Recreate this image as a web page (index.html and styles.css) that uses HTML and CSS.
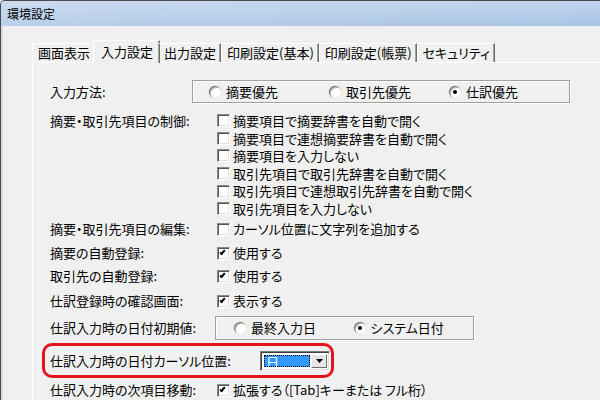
FILE: index.html
```html
<!DOCTYPE html>
<html lang="ja">

<head>
  <meta charset="utf-8">
  <title>環境設定</title>
  <link rel="stylesheet" href="styles.css">
</head>

<body>
  <div class="window">
    <div class="titlebar">環境設定</div>
    <div class="client">
      <div class="tabs">
        <div class="tab">画面表示</div>
        <div class="tab active">入力設定</div>
        <div class="tab">出力設定</div>
        <div class="tab">印刷設定(基本)</div>
        <div class="tab">印刷設定(帳票)</div>
        <div class="tab">セキュリティ</div>
      </div>
      <div class="pane">
        <div class="row r-method">
          <div class="label">入力方法:</div>
          <div class="group g-method">
            <span class="opt"><span class="radio"></span>摘要優先</span>
            <span class="opt"><span class="radio"></span>取引先優先</span>
            <span class="opt"><span class="radio on"></span>仕訳優先</span>
          </div>
        </div>

        <div class="row r-control">
          <div class="label">摘要・取引先項目の制御:</div>
          <div class="checks">
            <span class="opt"><span class="check"></span>摘要項目で摘要辞書を自動で開く</span>
            <span class="opt"><span class="check"></span>摘要項目で連想摘要辞書を自動で開く</span>
            <span class="opt"><span class="check"></span>摘要項目を入力しない</span>
            <span class="opt"><span class="check"></span>取引先項目で取引先辞書を自動で開く</span>
            <span class="opt"><span class="check"></span>取引先項目で連想取引先辞書を自動で開く</span>
            <span class="opt"><span class="check"></span>取引先項目を入力しない</span>
          </div>
        </div>

        <div class="row r-edit">
          <div class="label">摘要・取引先項目の編集:</div>
          <span class="opt"><span class="check"></span>カーソル位置に文字列を追加する</span>
        </div>

        <div class="row r-auto1">
          <div class="label">摘要の自動登録:</div>
          <span class="opt"><span class="check on"></span>使用する</span>
        </div>

        <div class="row r-auto2">
          <div class="label">取引先の自動登録:</div>
          <span class="opt"><span class="check on"></span>使用する</span>
        </div>

        <div class="row r-confirm">
          <div class="label">仕訳登録時の確認画面:</div>
          <span class="opt"><span class="check on"></span>表示する</span>
        </div>

        <div class="row r-date">
          <div class="label">仕訳入力時の日付初期値:</div>
          <div class="group g-date">
            <span class="opt"><span class="radio"></span>最終入力日</span>
            <span class="opt"><span class="radio on"></span>システム日付</span>
          </div>
        </div>

        <div class="row r-cursor">
          <div class="label">仕訳入力時の日付カーソル位置:</div>
          <div class="combo">
            <span class="combo-value"><span class="combo-text">日</span></span>
            <span class="combo-button">
              <svg width="7" height="4" viewBox="0 0 7 4"><path d="M0 0H7L3.5 4Z" fill="#000"/></svg>
            </span>
          </div>
        </div>

        <div class="row r-next">
          <div class="label">仕訳入力時の次項目移動:</div>
          <span class="opt"><span class="check on"></span>拡張する（[Tab]キーまたは フル桁）</span>
        </div>
      </div>
    </div>
  </div>
</body>

</html>
```

FILE: styles.css
```css
*,
*::before,
*::after {
  box-sizing: border-box;
}

body {
  margin: 0;
  width: 600px;
  height: 400px;
  overflow: hidden;
  font-family: "Noto Sans CJK JP", "Noto Sans", sans-serif;
  font-size: 13px;
  font-feature-settings: "palt";
  color: #000;
  background: #f0f0f0;
}

.window {
  height: 400px;
  border-top: 1px solid #4a4a4a;
  border-left: 1px solid #4a4a4a;
  border-top-left-radius: 5px;
  overflow: hidden;
}

.titlebar {
  height: 25px;
  line-height: 25px;
  padding-left: 6px;
  font-size: 12px;
  background:
    linear-gradient(to right, rgba(255, 255, 255, 0.18), rgba(255, 255, 255, 0)),
    linear-gradient(#c0d4ec, #a9c4e6);
}

.client {
  height: 374px;
  padding: 14px 0 0 29px;
  border-left: 2px solid #dcdcdc;
  background: #f0f0f0;
}

/* tabs */
.tabs {
  display: flex;
  align-items: flex-end;
  height: 22px;
  position: relative;
  z-index: 1;
}

.tab {
  height: 19px;
  line-height: 18px;
  padding: 0 4px 0 5px;
  border-top: 1px solid #fff;
  border-left: 1px solid #fff;
  border-right: 1px solid #6e6e6e;
  box-shadow: inset -1px 0 0 #a0a0a0;
  white-space: nowrap;
}

.tab.active {
  height: 23px;
  line-height: 21px;
  margin: 0 -1px -1px -2px;
  padding: 0 6px 0 7px;
  background: #f0f0f0;
}

.tab.active + .tab {
  border-left: none;
  padding-left: 5px;
}

/* tab page */
.pane {
  display: flex;
  flex-direction: column;
  height: 340px;
  padding: 17px 0 0 17px;
  border-top: 1px solid #fff;
  border-left: 1px solid #fff;
}

.row {
  display: grid;
  grid-template-columns: 166px auto;
  align-items: center;
  height: 18px;
  line-height: 18px;
  white-space: nowrap;
}

.r-method { height: 23px; }
.r-control { height: 106px; margin-top: 9px; align-items: start; }
.r-control .label { line-height: 17.6px; }
.r-edit { margin-top: 2px; }
.r-auto1 { margin-top: 6px; }
.r-auto2 { margin-top: 5px; }
.r-confirm { margin-top: 7px; }
.r-date { height: 24px; margin-top: 6px; }

.r-cursor {
  width: 292px;
  height: 35px;
  margin: 3px 0 0 -8px;
  padding-left: 5px;
  border: 3px solid #e5141c;
  border-radius: 10px;
}

.r-next { margin-top: 3px; }

.checks {
  display: grid;
  grid-auto-rows: 17.6px;
  line-height: 17.6px;
}

.opt {
  display: flex;
  align-items: center;
}

/* etched group boxes */
.group {
  display: flex;
  align-items: center;
  height: 100%;
  border: 1px solid #a0a0a0;
  box-shadow: inset 1px 1px 0 #fff, 1px 1px 0 #fff;
}

.group .opt {
  width: 120px;
}

.g-method {
  width: 378px;
  margin-left: -24px;
  padding-left: 16px;
}

.g-date {
  width: 259px;
  margin-left: -1px;
  padding-left: 18px;
}

/* controls */
.radio {
  position: relative;
  width: 12px;
  height: 12px;
  margin-right: 5px;
  border-radius: 50%;
  background: #fff;
  box-shadow: inset 1px 1px 0 #7a7a7a, inset 2px 2px 0 #c8c8c8, 0 0 0 0.5px #d8d8d8;
}

.radio.on::after {
  content: "";
  position: absolute;
  left: 4px;
  top: 4px;
  width: 4px;
  height: 4px;
  border-radius: 50%;
  background: #000;
}

.check {
  position: relative;
  width: 13px;
  height: 13px;
  margin: 0 3px 0 1px;
  background: #fff;
  border: 1px solid;
  border-color: #8a8a8a #fff #fff #8a8a8a;
  box-shadow: inset 1px 1px 0 #555, inset -1px -1px 0 #e0e0e0;
}

.check.on::after {
  content: "";
  position: absolute;
  left: 3px;
  top: 1px;
  width: 3px;
  height: 6px;
  border-right: 2px solid #000;
  border-bottom: 2px solid #000;
  transform: rotate(40deg);
}

.combo {
  display: flex;
  width: 70px;
  height: 20px;
  margin-left: 44px;
  padding: 2px;
  background: #fff;
  border: 1px solid;
  border-color: #7a7a7a #fff #fff #7a7a7a;
  box-shadow: inset 1px 1px 0 #404040, inset -1px -1px 0 #e0e0e0;
}

.combo-value {
  flex: 1;
  padding: 1px;
}

.combo-text {
  display: block;
  height: 100%;
  padding-left: 2px;
  line-height: 13px;
  color: #fff;
  background: #3399ff;
  outline: 1px dotted #000;
  outline-offset: -1px;
}

.combo-button {
  display: flex;
  align-items: center;
  justify-content: center;
  width: 16px;
  background: #e6e6e6;
  border: 1px solid;
  border-color: #fff #6e6e6e #6e6e6e #fff;
}
```
